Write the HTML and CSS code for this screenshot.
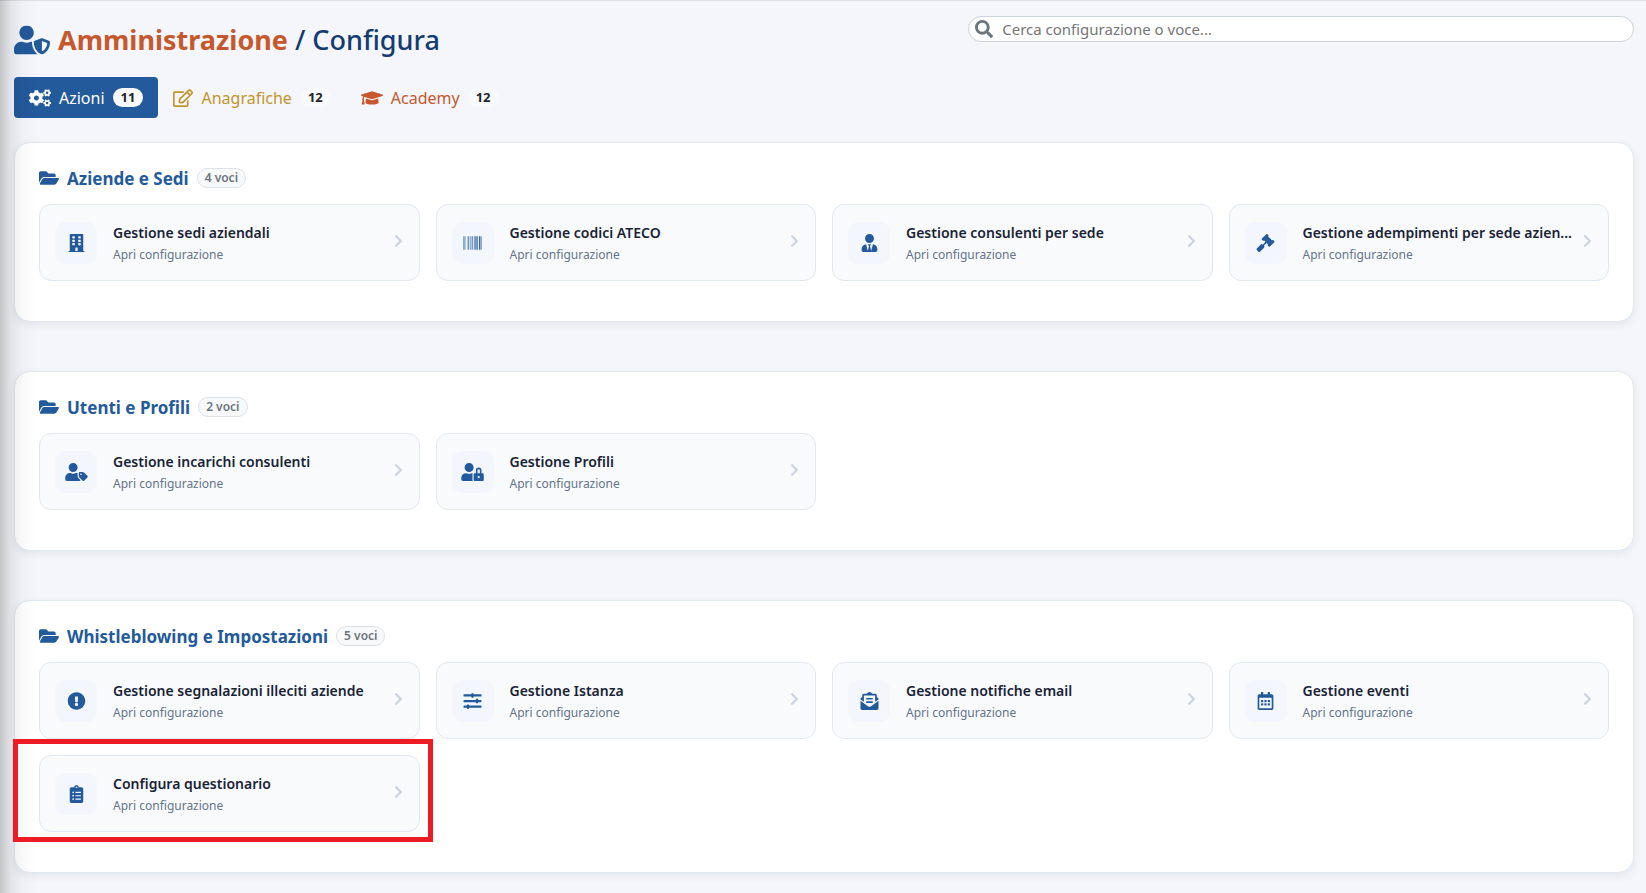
FILE: index.html
```html
<!DOCTYPE html>
<html lang="it">
<head>
    <meta charset="UTF-8">
    <meta name="viewport" content="width=device-width, initial-scale=1.0">
    <title>Amministrazione / Configura</title>
    <link rel="stylesheet" href="styles.css">
</head>
<body>
    <!-- Icone -->
    <svg class="sprite" aria-hidden="true">
        <symbol id="user-shield" viewBox="0 0 640 512"><path d="M622.3 271.1l-115.2-45c-4.1-1.6-12.6-3.7-22.2 0l-115.2 45c-10.7 4.2-17.7 14-17.7 24.9 0 111.6 68.7 188.8 132.9 213.9 9.6 3.7 18 1.6 22.2 0C558.4 489.9 640 420.5 640 296c0-10.9-7-20.7-17.7-24.9zM496 462.4V273.3l95.5 37.3c-5.6 87.1-60.9 135.4-95.5 151.8zM224 256c70.7 0 128-57.3 128-128S294.7 0 224 0 96 57.3 96 128s57.3 128 128 128zm96 40c0-2.5.8-4.8 1.1-7.2-2.5-.1-4.9-.8-7.5-.8h-16.7c-22.2 10.2-46.9 16-72.9 16s-50.6-5.8-72.9-16h-16.7C60.2 288 0 348.2 0 422.4V464c0 26.5 21.5 48 48 48h352c6.8 0 13.3-1.5 19.2-4-54-42.9-99.2-116.7-99.2-212z"/></symbol>
        <symbol id="cogs" viewBox="0 0 640 512"><path d="M512.1 191l-8.2 14.3c-3 5.3-9.4 7.5-15.1 5.4-11.8-4.4-22.6-10.7-32.1-18.6-4.6-3.8-5.8-10.5-2.8-15.7l8.2-14.3c-6.9-8-12.3-17.3-15.9-27.4h-16.5c-6 0-11.2-4.3-12.2-10.3-2-12-2.1-24.6 0-37.1 1-6 6.2-10.4 12.2-10.4h16.5c3.6-10.1 9-19.4 15.9-27.4l-8.2-14.3c-3-5.2-1.9-11.9 2.8-15.7 9.5-7.9 20.4-14.2 32.1-18.6 5.7-2.1 12.1.1 15.1 5.4l8.2 14.3c10.5-1.9 21.2-1.9 31.7 0L552 6.3c3-5.3 9.4-7.5 15.1-5.4 11.8 4.4 22.6 10.7 32.1 18.6 4.6 3.8 5.8 10.5 2.8 15.7l-8.2 14.3c6.9 8 12.3 17.3 15.9 27.4h16.5c6 0 11.2 4.3 12.2 10.3 2 12 2.1 24.6 0 37.1-1 6-6.2 10.4-12.2 10.4h-16.5c-3.6 10.1-9 19.4-15.9 27.4l8.2 14.3c3 5.2 1.9 11.9-2.8 15.7-9.5 7.9-20.4 14.2-32.1 18.6-5.7 2.1-12.1-.1-15.1-5.4l-8.2-14.3c-10.4 1.9-21.2 1.9-31.7 0zm-10.5-58.8c38.5 29.6 82.4-14.3 52.8-52.8-38.5-29.7-82.4 14.3-52.8 52.8zM386.3 286.1l33.7 16.8c10.1 5.8 14.5 18.1 10.5 29.1-8.9 24.2-26.4 46.4-42.6 65.8-7.4 8.9-20.2 11.1-30.3 5.3l-29.1-16.8c-16 13.7-34.6 24.6-54.9 31.7v33.6c0 11.6-8.3 21.6-19.7 23.6-24.6 4.2-50.4 4.4-75.9 0-11.5-2-20-11.9-20-23.6V418c-20.3-7.2-38.9-18-54.9-31.7L74 403c-10 5.8-22.9 3.6-30.3-5.3-16.2-19.4-33.3-41.6-42.2-65.7-4-10.9.4-23.2 10.5-29.1l33.3-16.8c-3.9-20.9-3.9-42.4 0-63.4L12 205.8c-10.1-5.8-14.6-18.1-10.5-29 8.9-24.2 26-46.4 42.2-65.8 7.4-8.9 20.2-11.1 30.3-5.3l29.1 16.8c16-13.7 34.6-24.6 54.9-31.7V57.1c0-11.5 8.2-21.5 19.6-23.5 24.6-4.2 50.5-4.4 76-.1 11.5 2 20 11.9 20 23.6v33.6c20.3 7.2 38.9 18 54.9 31.7l29.1-16.8c10-5.8 22.9-3.6 30.3 5.3 16.2 19.4 33.2 41.6 42.1 65.8 4 10.9.1 23.2-10 29.1l-33.7 16.8c3.9 21 3.9 42.5 0 63.5zm-117.6 21.1c59.2-77-28.7-164.9-105.7-105.7-59.2 77 28.7 164.9 105.7 105.7zm243.4 182.7l-8.2 14.3c-3 5.3-9.4 7.5-15.1 5.4-11.8-4.4-22.6-10.7-32.1-18.6-4.6-3.8-5.8-10.5-2.8-15.7l8.2-14.3c-6.9-8-12.3-17.3-15.9-27.4h-16.5c-6 0-11.2-4.3-12.2-10.3-2-12-2.1-24.6 0-37.1 1-6 6.2-10.4 12.2-10.4h16.5c3.6-10.1 9-19.4 15.9-27.4l-8.2-14.3c-3-5.2-1.9-11.9 2.8-15.7 9.5-7.9 20.4-14.2 32.1-18.6 5.7-2.1 12.1.1 15.1 5.4l8.2 14.3c10.5-1.9 21.2-1.9 31.7 0l8.2-14.3c3-5.3 9.4-7.5 15.1-5.4 11.8 4.4 22.6 10.7 32.1 18.6 4.6 3.8 5.8 10.5 2.8 15.7l-8.2 14.3c6.9 8 12.3 17.3 15.9 27.4h16.5c6 0 11.2 4.3 12.2 10.3 2 12 2.1 24.6 0 37.1-1 6-6.2 10.4-12.2 10.4h-16.5c-3.6 10.1-9 19.4-15.9 27.4l8.2 14.3c3 5.2 1.9 11.9-2.8 15.7-9.5 7.9-20.4 14.2-32.1 18.6-5.7 2.1-12.1-.1-15.1-5.4l-8.2-14.3c-10.4 1.9-21.2 1.9-31.7 0zM501.6 431c38.5 29.6 82.4-14.3 52.8-52.8-38.5-29.6-82.4 14.3-52.8 52.8z"/></symbol>
        <symbol id="edit" viewBox="0 0 576 512"><path d="M402.3 344.9l32-32c5-5 13.7-1.5 13.7 5.7V464c0 26.5-21.5 48-48 48H48c-26.5 0-48-21.5-48-48V112c0-26.5 21.5-48 48-48h273.5c7.1 0 10.7 8.6 5.7 13.7l-32 32c-1.5 1.5-3.5 2.3-5.7 2.3H48v352h352V350.5c0-2.1.8-4.1 2.3-5.6zm156.6-201.8L296.3 405.7l-90.4 10c-26.2 2.9-48.5-19.2-45.6-45.6l10-90.4L432.9 17.1c22.9-22.9 59.9-22.9 82.7 0l43.2 43.2c22.9 22.9 22.9 60 .1 82.8zM460.1 174L402 115.9 216.2 301.8l-7.3 65.3 65.3-7.3L460.1 174zm64.8-79.7l-43.2-43.2c-4.1-4.1-10.8-4.1-14.8 0L436 82l58.1 58.1 30.9-30.9c4-4.2 4-10.8-.1-14.9z"/></symbol>
        <symbol id="graduation-cap" viewBox="0 0 640 512"><path d="M622.34 153.2L343.4 67.5c-15.2-4.67-31.6-4.67-46.79 0L17.66 153.2c-23.54 7.23-23.54 38.36 0 45.59l48.63 14.94c-10.67 13.19-17.23 29.28-17.88 46.9C38.78 266.15 32 276.11 32 288c0 10.78 5.68 19.85 13.86 25.65L20.33 428.53C18.11 438.52 25.71 448 35.94 448h56.11c10.24 0 17.84-9.48 15.62-19.47L82.14 313.65C90.32 307.85 96 298.78 96 288c0-11.57-6.47-21.25-15.66-26.87.76-15.02 8.44-28.3 20.69-36.72L296.6 284.5c9.06 2.78 26.44 6.25 46.79 0l278.95-85.7c23.55-7.24 23.55-38.36 0-45.6zM352.79 315.09c-28.53 8.76-52.84 3.92-65.59 0l-145.02-44.55L128 384c0 35.35 85.96 64 192 64s192-28.65 192-64l-14.18-113.47-145.03 44.56z"/></symbol>
        <symbol id="search" viewBox="0 0 512 512"><path d="M505 442.7L405.3 343c-4.5-4.5-10.6-7-17-7H372c27.6-35.3 44-79.7 44-128C416 93.1 322.9 0 208 0S0 93.1 0 208s93.1 208 208 208c48.3 0 92.7-16.4 128-44v16.3c0 6.4 2.5 12.5 7 17l99.7 99.7c9.4 9.4 24.6 9.4 33.9 0l28.3-28.3c9.4-9.4 9.4-24.6.1-34zM208 336c-70.7 0-128-57.2-128-128 0-70.7 57.2-128 128-128 70.7 0 128 57.2 128 128 0 70.7-57.2 128-128 128z"/></symbol>
        <symbol id="folder-open" viewBox="0 0 576 512"><path d="M572.694 292.093L500.27 416.248A63.997 63.997 0 0 1 444.989 448H45.025c-18.523 0-30.064-20.093-20.731-36.093l72.424-124.155A64 64 0 0 1 152 256h399.964c18.523 0 30.064 20.093 20.73 36.093zM152 224h328v-48c0-26.51-21.49-48-48-48H272l-64-64H48C21.49 64 0 85.49 0 112v278.046l69.077-118.418C86.214 242.25 117.989 224 152 224z"/></symbol>
        <symbol id="chevron" viewBox="0 0 320 512"><path d="M285.476 272.971L91.132 467.314c-9.373 9.373-24.569 9.373-33.941 0l-22.667-22.667c-9.357-9.357-9.375-24.522-.04-33.901L188.505 256 34.484 101.255c-9.335-9.379-9.317-24.544.04-33.901l22.667-22.667c9.373-9.373 24.569-9.373 33.941 0L285.475 239.03c9.373 9.372 9.373 24.568.001 33.941z"/></symbol>
        <symbol id="building" viewBox="0 0 448 512"><path fill-rule="evenodd" d="M436 480h-20V24c0-13.3-10.7-24-24-24H56C42.7 0 32 10.7 32 24v456H12c-6.6 0-12 5.4-12 12v20h448v-20c0-6.6-5.4-12-12-12zM116 64h48q12 0 12 12v40q0 12-12 12h-48q-12 0-12-12V76q0-12 12-12zM284 64h48q12 0 12 12v40q0 12-12 12h-48q-12 0-12-12V76q0-12 12-12zM116 160h48q12 0 12 12v40q0 12-12 12h-48q-12 0-12-12v-40q0-12 12-12zM284 160h48q12 0 12 12v40q0 12-12 12h-48q-12 0-12-12v-40q0-12 12-12zM116 256h48q12 0 12 12v40q0 12-12 12h-48q-12 0-12-12v-40q0-12 12-12zM284 256h48q12 0 12 12v40q0 12-12 12h-48q-12 0-12-12v-40q0-12 12-12zM204 384h40q12 0 12 12v84h-64v-84q0-12 12-12z"/></symbol>
        <symbol id="barcode" viewBox="0 0 512 512"><path d="M0 448V64h18v384H0zm26.857-.273V64H36v383.727h-9.143zm27.143 0V64h8.857v383.727H54zm44.857 0V64h8.857v383.727h-8.857zm36 0V64h17.714v383.727h-17.714zm44.857 0V64h8.857v383.727h-8.857zm18 0V64h8.857v383.727h-8.857zm18 0V64h8.857v383.727h-8.857zm35.715 0V64h18v383.727h-18zm44.857 0V64h18v383.727h-18zm35.999 0V64h18.001v383.727h-18.001zm36.001 0V64h18.001v383.727h-18.001zm26.857 0V64h18v383.727h-18zm45.143 0V64h26.857v383.727h-26.857zm35.714 0V64h9.143v383.727H476zm18 .273V64h18v384h-18z"/></symbol>
        <symbol id="user-tie" viewBox="0 0 448 512"><path d="M224 256c70.7 0 128-57.3 128-128S294.7 0 224 0 96 57.3 96 128s57.3 128 128 128zm95.8 32.6L272 480l-32-136 32-56h-96l32 56-32 136-47.8-191.4C56.9 292 0 350.3 0 422.4V464c0 26.5 21.5 48 48 48h352c26.5 0 48-21.5 48-48v-41.6c0-72.1-56.9-130.4-128.2-133.8z"/></symbol>
        <symbol id="gavel" viewBox="0 0 512 512"><path d="M504.971 199.362l-22.627-22.627c-9.373-9.373-24.569-9.373-33.941 0l-5.657 5.657L329.608 69.255l5.657-5.657c9.373-9.373 9.373-24.569 0-33.941L312.638 7.029c-9.373-9.373-24.569-9.373-33.941 0L154.246 131.48c-9.373 9.373-9.373 24.569 0 33.941l22.627 22.627c9.373 9.373 24.569 9.373 33.941 0l5.657-5.657 39.598 39.598-81.04 81.04-5.657-5.657c-12.497-12.497-32.758-12.497-45.255 0L9.373 412.118c-12.497 12.497-12.497 32.758 0 45.255l45.255 45.255c12.497 12.497 32.758 12.497 45.255 0l114.745-114.745c12.497-12.497 12.497-32.758 0-45.255l-5.657-5.657 81.04-81.04 39.598 39.598-5.657 5.657c-9.373 9.373-9.373 24.569 0 33.941l22.627 22.627c9.373 9.373 24.569 9.373 33.941 0l124.451-124.451c9.372-9.372 9.372-24.568 0-33.941z"/></symbol>
        <symbol id="user-tag" viewBox="0 0 640 512"><path d="M630.6 364.9l-90.3-90.2c-12-12-28.3-18.7-45.3-18.7h-79.3c-17.7 0-32 14.3-32 32v79.2c0 17 6.7 33.2 18.7 45.2l90.3 90.2c12.5 12.5 32.8 12.5 45.3 0l92.5-92.5c12.6-12.5 12.6-32.7.1-45.2zm-182.8-21c-13.3 0-24-10.7-24-24s10.7-24 24-24 24 10.7 24 24c0 13.2-10.7 24-24 24zm-223.8-88c70.7 0 128-57.3 128-128C352 57.3 294.7 0 224 0S96 57.3 96 128c0 70.6 57.3 127.9 128 127.9zm127.8 111.2V294c-12.2-3.6-24.9-6.2-38.2-6.2h-16.7c-22.2 10.2-46.9 16-72.9 16s-50.6-5.8-72.9-16h-16.7C60.2 287.9 0 348.1 0 422.3v41.6c0 26.5 21.5 48 48 48h352c15.5 0 29.1-7.5 37.9-18.9l-58-58c-18.1-18.1-28.1-42.2-28.1-67.9z"/></symbol>
        <symbol id="user-lock" viewBox="0 0 640 512"><path d="M224 256A128 128 0 1 0 96 128a128 128 0 0 0 128 128zm96 64a63.08 63.08 0 0 1 8.1-30.5c-4.8-.5-9.5-1.5-14.5-1.5h-16.7a174.08 174.08 0 0 1-145.8 0h-16.7A134.43 134.43 0 0 0 0 422.4V464a48 48 0 0 0 48 48h280.9a63.54 63.54 0 0 1-8.9-32zm288-32h-32v-80a80 80 0 0 0-160 0v80h-32a32 32 0 0 0-32 32v160a32 32 0 0 0 32 32h224a32 32 0 0 0 32-32V320a32 32 0 0 0-32-32zM496 432a32 32 0 1 1 32-32 32 32 0 0 1-32 32zm32-144h-64v-80a32 32 0 0 1 64 0z"/></symbol>
        <symbol id="exclamation" viewBox="0 0 512 512"><path d="M504 256c0 136.997-111.043 248-248 248S8 392.997 8 256C8 119.083 119.043 8 256 8s248 111.083 248 248zm-248 50c-25.405 0-46 20.595-46 46s20.595 46 46 46 46-20.595 46-46-20.595-46-46-46zm-43.673-165.346l7.418 136c.347 6.364 5.609 11.346 11.982 11.346h48.546c6.373 0 11.635-4.982 11.982-11.346l7.418-136c.375-6.874-5.098-12.654-11.982-12.654h-63.383c-6.884 0-12.356 5.78-11.981 12.654z"/></symbol>
        <symbol id="sliders" viewBox="0 0 512 512"><path d="M496 384H160v-16c0-8.8-7.2-16-16-16h-32c-8.8 0-16 7.2-16 16v16H16c-8.8 0-16 7.2-16 16v32c0 8.8 7.2 16 16 16h80v16c0 8.8 7.2 16 16 16h32c8.8 0 16-7.2 16-16v-16h336c8.8 0 16-7.2 16-16v-32c0-8.8-7.2-16-16-16zm0-160h-80v-16c0-8.8-7.2-16-16-16h-32c-8.8 0-16 7.2-16 16v16H16c-8.8 0-16 7.2-16 16v32c0 8.8 7.2 16 16 16h336v16c0 8.8 7.2 16 16 16h32c8.8 0 16-7.2 16-16v-16h80c8.8 0 16-7.2 16-16v-32c0-8.8-7.2-16-16-16zm0-160H288V48c0-8.8-7.2-16-16-16h-32c-8.8 0-16 7.2-16 16v16H16C7.2 64 0 71.2 0 80v32c0 8.8 7.2 16 16 16h208v16c0 8.8 7.2 16 16 16h32c8.8 0 16-7.2 16-16v-16h208c8.8 0 16-7.2 16-16V80c0-8.8-7.2-16-16-16z"/></symbol>
        <symbol id="envelope" viewBox="0 0 512 512"><path d="M176 216h160c8.84 0 16-7.16 16-16v-16c0-8.84-7.16-16-16-16H176c-8.84 0-16 7.16-16 16v16c0 8.84 7.16 16 16 16zm-16 80c0 8.84 7.16 16 16 16h160c8.84 0 16-7.16 16-16v-16c0-8.84-7.16-16-16-16H176c-8.84 0-16 7.16-16 16v16zm96 121.13c-16.42 0-32.84-5.06-46.86-15.19L0 250.86V464c0 26.51 21.49 48 48 48h416c26.51 0 48-21.49 48-48V250.86L302.86 401.94c-14.02 10.12-30.44 15.19-46.86 15.19zm237.61-254.18c-8.85-6.94-17.24-13.47-29.61-22.81V96c0-26.51-21.49-48-48-48h-77.55c-3.04-2.2-5.87-4.26-9.04-6.56C312.6 29.17 279.2-.35 256 0c-23.2-.35-56.59 29.17-73.41 41.44-3.17 2.3-6 4.36-9.04 6.56H96c-26.51 0-48 21.49-48 48v44.14c-12.37 9.33-20.76 15.87-29.61 22.81A47.995 47.995 0 0 0 0 200.72v10.65l96 69.35V96h320v184.72l96-69.35v-10.65c0-14.74-6.78-28.67-18.39-37.77z"/></symbol>
        <symbol id="calendar" viewBox="0 0 448 512"><path d="M448 112v352c0 26.5-21.5 48-48 48H48c-26.5 0-48-21.5-48-48V112c0-26.5 21.5-48 48-48h48V12c0-6.6 5.4-12 12-12h40c6.6 0 12 5.4 12 12v52h128V12c0-6.6 5.4-12 12-12h40c6.6 0 12 5.4 12 12v52h48c26.5 0 48 21.5 48 48zm-48 346V160H48v298c0 3.3 2.7 6 6 6h340c3.3 0 6-2.7 6-6z"/><rect x="96" y="224" width="64" height="64" rx="12"/><rect x="192" y="224" width="64" height="64" rx="12"/><rect x="288" y="224" width="64" height="64" rx="12"/><rect x="96" y="320" width="64" height="64" rx="12"/><rect x="192" y="320" width="64" height="64" rx="12"/><rect x="288" y="320" width="64" height="64" rx="12"/></symbol>
        <symbol id="clipboard" viewBox="0 0 384 512"><path fill-rule="evenodd" d="M336 64h-80c0-35.3-28.7-64-64-64s-64 28.7-64 64H48C21.5 64 0 85.5 0 112v352c0 26.5 21.5 48 48 48h288c26.5 0 48-21.5 48-48V112c0-26.5-21.5-48-48-48zM192 40a24 24 0 1 1 0 48 24 24 0 0 1 0-48zM96 184a24 24 0 1 1 0 48 24 24 0 0 1 0-48zM96 280a24 24 0 1 1 0 48 24 24 0 0 1 0-48zM96 376a24 24 0 1 1 0 48 24 24 0 0 1 0-48zM168 192h144q8 0 8 8v16q0 8-8 8H168q-8 0-8-8v-16q0-8 8-8zM168 288h144q8 0 8 8v16q0 8-8 8H168q-8 0-8-8v-16q0-8 8-8zM168 384h144q8 0 8 8v16q0 8-8 8H168q-8 0-8-8v-16q0-8 8-8z"/></symbol>
    </svg>

    <main class="page">
        <header class="page-header">
            <h1 class="page-title">
                <svg class="title-icon" viewBox="0 0 640 512"><use href="#user-shield"/></svg>
                <span><strong>Amministrazione</strong> / Configura</span>
            </h1>
            <label class="search-box">
                <svg class="search-icon" viewBox="0 0 512 512"><use href="#search"/></svg>
                <input type="search" aria-label="Cerca configurazione o voce" placeholder="Cerca configurazione o voce...">
            </label>
        </header>

        <!-- Schede -->
        <nav class="tabs">
            <button type="button" class="tab active"><svg class="tab-icon wide" viewBox="0 0 640 512"><use href="#cogs"/></svg>Azioni <span class="count">11</span></button>
            <button type="button" class="tab gold"><svg class="tab-icon" viewBox="0 0 576 512"><use href="#edit"/></svg>Anagrafiche <span class="count">12</span></button>
            <button type="button" class="tab orange"><svg class="tab-icon wide" viewBox="0 0 640 512"><use href="#graduation-cap"/></svg>Academy <span class="count">12</span></button>
        </nav>

        <div class="sections">
            <section class="section">
                <h2 class="section-title"><svg class="folder" viewBox="0 0 576 512"><use href="#folder-open"/></svg>Aziende e Sedi <span class="voci">4 voci</span></h2>
                <div class="cards">
                    <a href="#" class="card">
                        <span class="card-icon"><svg><use href="#building"/></svg></span>
                        <span class="card-text"><span class="card-title">Gestione sedi aziendali</span><span class="card-sub">Apri configurazione</span></span>
                        <svg class="chevron"><use href="#chevron"/></svg>
                    </a>
                    <a href="#" class="card">
                        <span class="card-icon"><svg><use href="#barcode"/></svg></span>
                        <span class="card-text"><span class="card-title">Gestione codici ATECO</span><span class="card-sub">Apri configurazione</span></span>
                        <svg class="chevron"><use href="#chevron"/></svg>
                    </a>
                    <a href="#" class="card">
                        <span class="card-icon"><svg><use href="#user-tie"/></svg></span>
                        <span class="card-text"><span class="card-title">Gestione consulenti per sede</span><span class="card-sub">Apri configurazione</span></span>
                        <svg class="chevron"><use href="#chevron"/></svg>
                    </a>
                    <a href="#" class="card">
                        <span class="card-icon"><svg><use href="#gavel"/></svg></span>
                        <span class="card-text"><span class="card-title">Gestione adempimenti per sede azien...</span><span class="card-sub">Apri configurazione</span></span>
                        <svg class="chevron"><use href="#chevron"/></svg>
                    </a>
                </div>
            </section>

            <section class="section">
                <h2 class="section-title"><svg class="folder" viewBox="0 0 576 512"><use href="#folder-open"/></svg>Utenti e Profili <span class="voci">2 voci</span></h2>
                <div class="cards">
                    <a href="#" class="card">
                        <span class="card-icon"><svg><use href="#user-tag"/></svg></span>
                        <span class="card-text"><span class="card-title">Gestione incarichi consulenti</span><span class="card-sub">Apri configurazione</span></span>
                        <svg class="chevron"><use href="#chevron"/></svg>
                    </a>
                    <a href="#" class="card">
                        <span class="card-icon"><svg><use href="#user-lock"/></svg></span>
                        <span class="card-text"><span class="card-title">Gestione Profili</span><span class="card-sub">Apri configurazione</span></span>
                        <svg class="chevron"><use href="#chevron"/></svg>
                    </a>
                </div>
            </section>

            <section class="section">
                <h2 class="section-title"><svg class="folder" viewBox="0 0 576 512"><use href="#folder-open"/></svg>Whistleblowing e Impostazioni <span class="voci">5 voci</span></h2>
                <div class="cards">
                    <a href="#" class="card">
                        <span class="card-icon"><svg><use href="#exclamation"/></svg></span>
                        <span class="card-text"><span class="card-title">Gestione segnalazioni illeciti aziende</span><span class="card-sub">Apri configurazione</span></span>
                        <svg class="chevron"><use href="#chevron"/></svg>
                    </a>
                    <a href="#" class="card">
                        <span class="card-icon"><svg><use href="#sliders"/></svg></span>
                        <span class="card-text"><span class="card-title">Gestione Istanza</span><span class="card-sub">Apri configurazione</span></span>
                        <svg class="chevron"><use href="#chevron"/></svg>
                    </a>
                    <a href="#" class="card">
                        <span class="card-icon"><svg><use href="#envelope"/></svg></span>
                        <span class="card-text"><span class="card-title">Gestione notifiche email</span><span class="card-sub">Apri configurazione</span></span>
                        <svg class="chevron"><use href="#chevron"/></svg>
                    </a>
                    <a href="#" class="card">
                        <span class="card-icon"><svg><use href="#calendar"/></svg></span>
                        <span class="card-text"><span class="card-title">Gestione eventi</span><span class="card-sub">Apri configurazione</span></span>
                        <svg class="chevron"><use href="#chevron"/></svg>
                    </a>
                    <a href="#" class="card highlighted">
                        <span class="card-icon"><svg><use href="#clipboard"/></svg></span>
                        <span class="card-text"><span class="card-title">Configura questionario</span><span class="card-sub">Apri configurazione</span></span>
                        <svg class="chevron"><use href="#chevron"/></svg>
                    </a>
                </div>
            </section>
        </div>
    </main>
</body>
</html>
```
FILE: styles.css
```css
* {
    margin: 0;
    padding: 0;
    box-sizing: border-box;
}

body {
    font-family: "Segoe UI", "Noto Sans", "Open Sans", sans-serif;
    font-size: 16px;
    color: #1e293b;
    background-color: #f4f6fb;
}

/* Ombra del menu laterale */
body::before {
    content: "";
    position: fixed;
    top: 0;
    bottom: 0;
    left: 0;
    width: 36px;
    background: linear-gradient(to right, rgba(0, 0, 0, 0.2), rgba(0, 0, 0, 0.07) 30%, rgba(0, 0, 0, 0.02) 65%, transparent);
    pointer-events: none;
    z-index: 2;
}

svg {
    fill: currentColor;
    flex-shrink: 0;
}

.sprite {
    display: none;
}

.page {
    min-height: 100vh;
    padding: 15px 12px 20px 14px;
    border-top: 1px solid #dcdfe5;
}

/* Intestazione */
.page-header {
    display: flex;
    justify-content: space-between;
    align-items: flex-start;
    margin-bottom: 13px;
}

.page-title {
    display: flex;
    align-items: center;
    gap: 8px;
    font-size: 27px;
    font-weight: 500;
    line-height: 48px;
    color: #143b72;
}

.page-title strong {
    font-weight: 700;
    color: #c5592d;
}

.title-icon {
    width: 36px;
    height: 30px;
    color: #235a9c;
}

.search-box {
    display: flex;
    align-items: center;
    gap: 9px;
    width: 41.1%;
    height: 26px;
    padding: 0 6px;
    background-color: #fff;
    border: 1px solid #ccd3dc;
    border-radius: 13px;
}

.search-icon {
    width: 18px;
    height: 18px;
    color: #6c757d;
}

.search-box input {
    flex: 1;
    border: none;
    outline: none;
    background: none;
    font-family: inherit;
    font-size: 15px;
    line-height: 20px;
}

.search-box input::placeholder {
    color: #757575;
}

/* Schede */
.tabs {
    display: flex;
    margin-bottom: 24px;
}

.tab {
    display: flex;
    align-items: center;
    gap: 8px;
    height: 41px;
    padding: 0 15px;
    border: none;
    border-radius: 4px;
    background: none;
    font-family: inherit;
    font-size: 16px;
    cursor: pointer;
}

.tab.active {
    background-color: #235a9c;
    color: #fff;
}

.tab.gold {
    color: #c2952b;
}

.tab.orange {
    color: #c5592d;
}

.tab-icon {
    width: 20px;
    height: 18px;
}

.tab-icon.wide {
    width: 22px;
}

.count {
    padding: 0 8px;
    border-radius: 10px;
    background-color: #f8f9fa;
    color: #212529;
    font-size: 13px;
    font-weight: 700;
    line-height: 19px;
}

/* Sezioni */
.sections {
    display: flex;
    flex-direction: column;
    gap: 49px;
}

.section {
    padding: 22px 24px 40px;
    background-color: #fff;
    border: 1px solid #e2e8f0;
    border-radius: 16px;
    box-shadow: 0 3px 8px rgba(30, 41, 59, 0.08);
}

.section-title {
    display: flex;
    align-items: center;
    gap: 8px;
    margin-bottom: 12px;
    font-size: 17px;
    font-weight: 700;
    line-height: 27px;
    color: #235a9c;
}

.folder {
    width: 20px;
    height: 18px;
    margin-bottom: 2px;
}

.voci {
    margin-bottom: 2px;
    padding: 0 7px;
    border: 1px solid #dee2e6;
    border-radius: 10px;
    background-color: #f8f9fa;
    color: #6c757d;
    font-size: 12px;
    font-weight: 600;
    line-height: 18px;
}

.cards {
    display: grid;
    grid-template-columns: repeat(4, minmax(0, 1fr));
    gap: 16px;
}

.card {
    position: relative;
    display: flex;
    align-items: center;
    height: 77px;
    padding: 0 16px 0 15px;
    border: 1px solid #e2e8f0;
    border-radius: 12px;
    background-color: #f8fafc;
    color: #1a2336;
    text-decoration: none;
}

.card-icon {
    display: flex;
    align-items: center;
    justify-content: center;
    flex-shrink: 0;
    width: 42px;
    height: 42px;
    margin-right: 16px;
    border-radius: 10px;
    background-color: #f3f7fd;
    color: #235a9c;
}

.card-icon svg {
    width: 23px;
    height: 18px;
}

.card-text {
    flex: 1;
    min-width: 0;
}

.card-title,
.card-sub {
    display: block;
    white-space: nowrap;
}

.card-title {
    overflow: hidden;
    text-overflow: ellipsis;
    font-size: 14px;
    font-weight: 600;
    line-height: 24px;
}

.card-sub {
    font-size: 12px;
    line-height: 20px;
    color: #64748b;
}

.chevron {
    width: 9px;
    height: 14px;
    margin-bottom: 3px;
    color: #cbd5e1;
}

/* Riquadro rosso sulla voce evidenziata */
.highlighted::after {
    content: "";
    position: absolute;
    top: -17px;
    right: -14px;
    bottom: -11px;
    left: -27px;
    border: 5px solid #ed1c24;
    z-index: 3;
}
```
